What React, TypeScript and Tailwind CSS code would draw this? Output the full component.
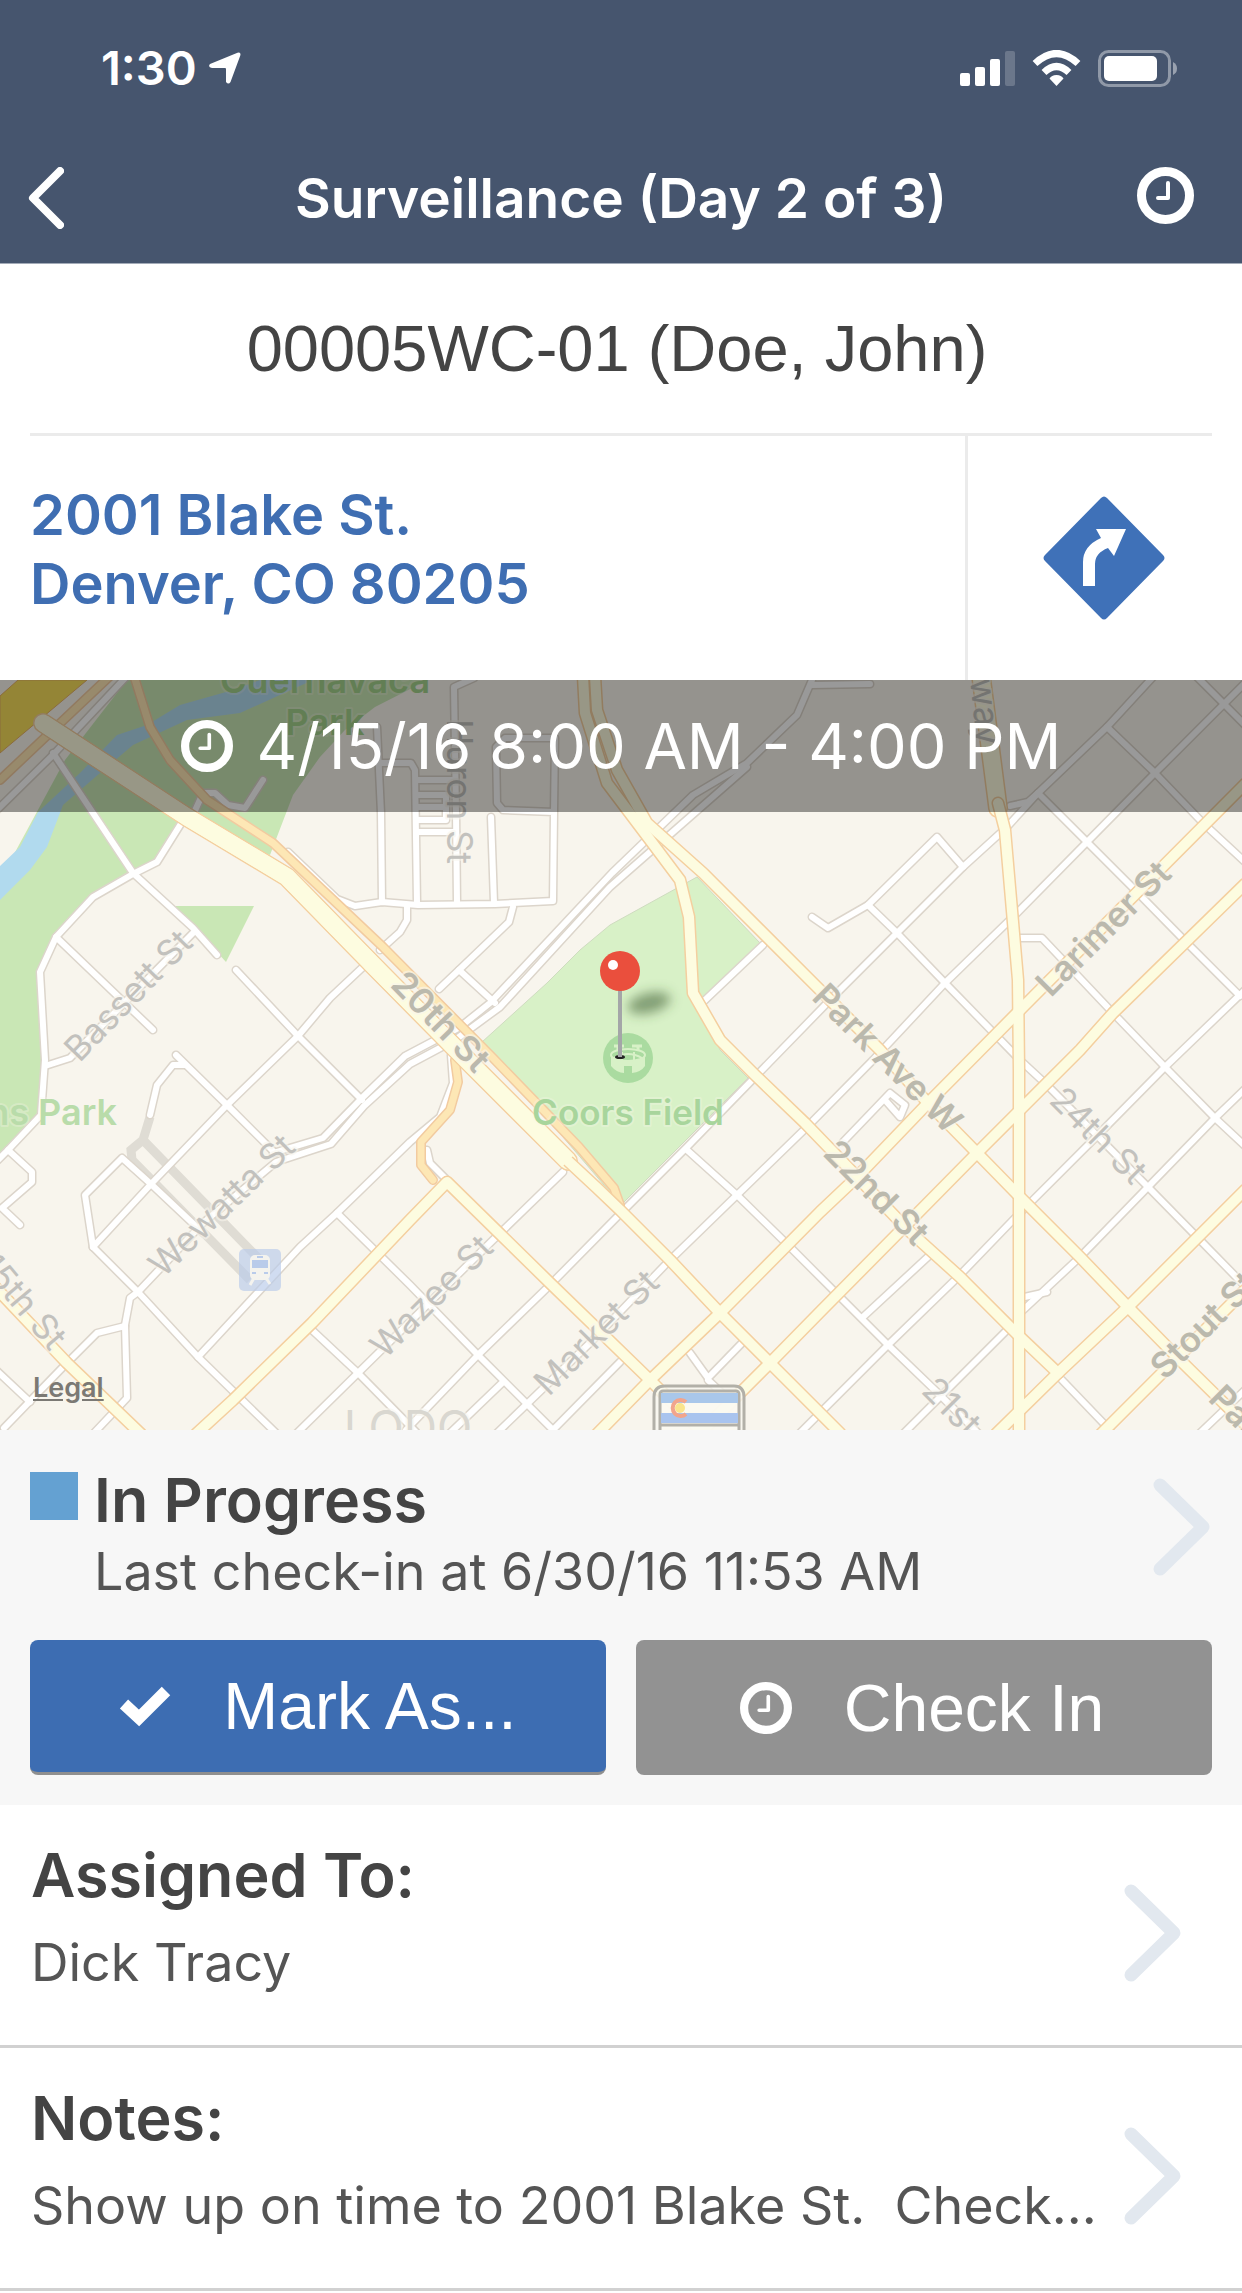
import type { ReactNode } from "react";

const whiteRoads = [
  "M53 753L133 873L193 928L217 955",
  "M182 822L157 862L133 874L93 897L56 937L40 972L45 1060L41 1115L8 1150L-4 1162",
  "M56 937L153 1030",
  "M45 1066L70 1058L193 933",
  "M-4 811L53 755L65 742L127 676",
  "M193 815L203 793L215 793L228 805L245 808L263 780",
  "M236 970L298 1036L362 1100",
  "M363 967L330 998L298 1036L227 1105L152 1183L93 1247",
  "M288 852L337 899L355 906L382 902L418 905L495 904L553 901L554 812L503 810L497 803L496 747L505 738L555 738L554 812",
  "M407 905L407 920L400 932L380 950",
  "M382 902L381 813L377 727",
  "M381 763L411 763L415 770L417 903",
  "M457 903L456 813L454 687L474 678",
  "M417 780H453M417 795H446V820M417 807H446M417 820H446M417 832H456",
  "M491 817L494 903",
  "M513 907L509 922L459 970L439 989",
  "M459 970L495 1003",
  "M812 680L797 715L747 763L693 795L612 873L490 1003L460 1027L405 1056L362 1098L323 1138L273 1153",
  "M747 767L610 887L500 1007L455 1040L410 1064L364 1106L331 1144L276 1162L203 1223L138 1292L130 1298L125 1325L127 1398L94 1433",
  "M125 1326L97 1333L63 1367L4 1428",
  "M-4 1370L30 1402",
  "M176 1055L227 1105L275 1153",
  "M185 1065L173 1065L157 1085L150 1115",
  "M93 1247L85 1195L122 1158L152 1185L203 1233",
  "M93 1247L138 1292L198 1357L276 1433",
  "M198 1357L300 1247L337 1213L410 1142L440 1117L453 1083L451 1055",
  "M8 1150L32 1172L32 1182L2 1208L20 1225",
  "M337 1213L410 1285L478 1355L556 1433",
  "M312 1330L358 1373L416 1432",
  "M297 1433L358 1373L493 1240L563 1172",
  "M406 1430L478 1355L548 1287L617 1217L687 1147L757 1075L830 1000L897 933L963 867L1007 827L1038 793L1107 727L1153 677",
  "M450 1433L502 1383",
  "M497 1433L528 1403L593 1340L667 1263L737 1195L807 1127L873 1060L945 983L1017 913L1087 842L1155 773L1245 683",
  "M550 1433L620 1362",
  "M427 1150L430 1163L447 1180",
  "M687 1150L737 1195L790 1247L830 1287L888 1345L940 1395L978 1433",
  "M690 1353L708 1378L742 1343",
  "M708 1380L727 1398",
  "M800 1433L888 1345L958 1277L1013 1220L1093 1140L1165 1067L1245 990",
  "M843 1142L890 1093L905 1105L900 1117L885 1100",
  "M863 1317L930 1255",
  "M904 1433L940 1397L1007 1330",
  "M1020 1313L1080 1257L1148 1187L1215 1118L1245 1089",
  "M1047 1292L1020 1298",
  "M1245 1286L1200 1240L1148 1187L1047 1085L1020 1060L945 983L897 933L868 905L937 837L963 867",
  "M868 905L828 928L812 917",
  "M1038 793L1087 842L1135 890L1187 943L1240 996",
  "M1107 727L1155 773L1203 823L1245 862",
  "M1197 677L1223 703L1245 725",
  "M1015 938H1042L1113 1013L1165 1067L1215 1118L1245 1146",
  "M1010 806L1028 802L1038 793",
  "M812 685L870 684",
  "M763 945L703 1002",
  "M1062 1380L1110 1430",
  "M1200 1433L1245 1390",
];

const amberRoads = [
  "M134 676L150 727L170 760L207 800L273 843L383 947L493 1058L579 1147L614 1188L620 1205",
  "M455 1060L458 1082L450 1110L421 1142L421 1165L433 1180",
  "M110 676L0 780",
];

const yellowRoads = [
  "M568 1161L597 1188L620 1210L670 1260L720 1313L770 1363L840 1433",
  "M583 676L585 713L607 783L650 840L680 880L689 917L693 993L720 1040L755 1075L805 1123L863 1183L908 1230L960 1277L1018 1335L1058 1373",
  "M595 676L597 710L617 770L647 823L703 873L830 1000L880 1050L928 1103L977 1153L1020 1197L1080 1257L1128 1307L1180 1360L1245 1424",
  "M998 803L1005 830L1018 980L1019 1070V1436",
  "M1245 784L1023 1007L928 1103L857 1177L820 1212L720 1313L648 1382L597 1434",
  "M1245 884L1113 1013L1080 1050L1020 1110L977 1153L908 1223L820 1312L770 1363L699 1434",
  "M1245 1190L1128 1307L1058 1373L996 1434",
  "M1245 1290L1101 1434",
  "M704 1434L650 1380L550 1283L498 1232L447 1182L410 1220L312 1323L233 1400L196 1434",
  "M-4 1288L67 1363L141 1434",
];

const broadRoads = ["M43 723L187 817L287 877L373 965L455 1048L568 1161", "M981 676L998 808"];

type StreetLabel = { text: string; x: number; y: number; turn: number; major?: boolean; anchor?: "start" | "middle" | "end" };

const streetLabels: StreetLabel[] = [
  { text: "Bassett St", x: 137, y: 1004, turn: -46 },
  { text: "Wewatta St", x: 230, y: 1214, turn: -44 },
  { text: "Wazee St", x: 440, y: 1305, turn: -45 },
  { text: "Market St", x: 605, y: 1341, turn: -45 },
  { text: "24th St", x: 1090, y: 1144, turn: 45 },
  { text: "21st St", x: 920, y: 1392, turn: 45, anchor: "start" },
  { text: "15th St", x: 50, y: 1352, turn: 50, anchor: "end" },
  { text: "Huron St", x: 447, y: 864, turn: 90, anchor: "end" },
  { text: "Broadway", x: 977, y: 746, turn: 84, anchor: "end" },
  { text: "20th St", x: 432, y: 1030, turn: 46, major: true },
  { text: "Park Ave W", x: 879, y: 1067, turn: 45, major: true },
  { text: "22nd St", x: 868, y: 1201, turn: 45, major: true },
  { text: "Larimer St", x: 1112, y: 937, turn: -45, major: true },
  { text: "Stout St", x: 1165, y: 1381, turn: -45, major: true, anchor: "start" },
  { text: "Park", x: 1207, y: 1400, turn: 45, major: true, anchor: "start" },
];

function Roads({ paths, edge, fill, width }: { paths: string[]; edge: string; fill: string; width: number }) {
  return (
    <g fill="none" strokeLinecap="round" strokeLinejoin="round">
      {paths.map((d) => (
        <path key={"e" + d} d={d} stroke={edge} strokeWidth={width + 3} />
      ))}
      {paths.map((d) => (
        <path key={"f" + d} d={d} stroke={fill} strokeWidth={width} />
      ))}
    </g>
  );
}

function CityMap() {
  return (
    <svg
      viewBox="0 680 1242 750"
      preserveAspectRatio="xMidYMid slice"
      className="block h-full w-full bg-[#f8f5ed]"
      role="img"
      aria-label="Map of Coors Field, Denver"
    >
      <defs>
        <filter id="pin-shadow" x="-50%" y="-100%" width="200%" height="300%">
          <feGaussianBlur stdDeviation="6" />
        </filter>
      </defs>

      {/* Parks and river */}
      <path
        fill="#c9e7b5"
        d="M127 680H428L375 707L345 730L320 757L293 795L270 855L182 822L157 862L133 874L93 897L56 937L40 972L45 1050L41 1115L8 1150L0 1158V880L65 760Z"
      />
      <path
        fill="#b1daee"
        d="M313 680L240 713L187 720L133 745L100 773L63 805L47 847L30 870L0 900V866L20 847L38 812L80 773L117 735L147 725L180 705L233 690L260 680Z"
      />
      <path fill="#c9e7b5" d="M175 906H254L226 962Z" />
      <path
        fill="#d8f1c7"
        stroke="#cfdcc0"
        d="M697 877L610 925L580 950L547 983L482 1042L621 1205L748 1078L720 1050L700 1005L760 943Z"
      />
      <path fill="#f7de5a" stroke="#e8b266" d="M18 680H87L0 753V696Z" />

      <path d="M150 1117L143 1140L131 1150L132 1160L250 1280M143 1140L262 1262" fill="none" stroke="#dfdcd4" strokeWidth="9" />
      <Roads paths={whiteRoads} edge="#dcd5cb" fill="#ffffff" width={6} />
      <Roads paths={amberRoads} edge="#f2cba0" fill="#fde7b5" width={7} />
      <Roads paths={broadRoads} edge="#f4cf9f" fill="#fdfce0" width={17} />
      <Roads paths={yellowRoads} edge="#f4cf9f" fill="#fdfce0" width={10} />
      <path d={broadRoads[0]} fill="none" stroke="#fdfce0" strokeWidth="17" />

      {/* Transit stop */}
      <rect x="239" y="1249" width="42" height="42" rx="5" fill="#b9cbea" fillOpacity="0.68" />
      <path d="M254 1278L250 1285M266 1278L270 1284" stroke="#f4f3ee" strokeWidth="3" />
      <rect x="250" y="1255" width="20" height="25" rx="5" fill="#f4f3ee" />
      <rect x="252" y="1260" width="16" height="8" fill="#b9cbea" />
      <path d="M252 1273H256M264 1273H268M257 1257H263" stroke="#b9cbea" strokeWidth="2" />

      {/* Stadium marker */}
      <circle cx="628" cy="1058" r="25" fill="#aadba0" />
      <path d="M618 1046V1054M638 1046V1054M632 1046H642M614 1046H624" stroke="#d8f1c7" strokeWidth="3" />
      <path d="M611 1055V1066Q617 1073 624 1073V1066H632V1073Q641 1072 645 1066V1055Z" fill="#d8f1c7" />
      <ellipse cx="628" cy="1055" rx="17" ry="6" fill="#aadba0" stroke="#d8f1c7" strokeWidth="2" />
      <path d="M614 1058Q628 1050 642 1058M622 1060V1052M634 1060V1052" fill="none" stroke="#d8f1c7" strokeWidth="2" />

      {/* Labels */}
      <g
        fontFamily="Inter, sans-serif"
        stroke="#f8f5ed"
        strokeOpacity="0.6"
        strokeWidth="4"
        strokeLinejoin="round"
        paintOrder="stroke"
      >
        {streetLabels.map((l) => (
          <text
            key={l.text + l.x}
            transform={"translate(" + l.x + " " + l.y + ") rotate(" + l.turn + ")"}
            textAnchor={l.anchor ?? "middle"}
            fontSize="35"
            fontWeight={l.major ? 600 : 400}
            fill={l.major ? "#bbb9ad" : "#c2c1bd"}
          >
            {l.text}
          </text>
        ))}
        <g fontSize="36" fontWeight="600" fill="#a8d59c" strokeOpacity="0.3">
          <text x="325" y="693" textAnchor="middle" fill="#a4d38c">Cuernavaca</text>
          <text x="325" y="735" textAnchor="middle" fill="#a4d38c">Park</text>
          <text x="628" y="1125" textAnchor="middle" fontSize="35">Coors Field</text>
          <text x="117" y="1125" textAnchor="end" fill="#b9dcaa">ns Park</text>
        </g>
        <text x="408" y="1444" fontSize="46" textAnchor="middle" fill="#d9d7d0">LODO</text>
      </g>

      {/* State route shield */}
      <g>
        <path d="M654 1432V1397Q654 1386 665 1386H734Q744 1386 744 1397V1432Z" fill="#f8f6ef" fillOpacity="0.8" stroke="#b2b0a8" strokeWidth="3" />
        <rect x="660" y="1391" width="79" height="50" rx="3" fill="#fbfaf1" fillOpacity="0.8" stroke="#b2b0a8" strokeWidth="3" />
        <rect x="661" y="1393" width="77" height="10" fill="#a9c7ea" />
        <rect x="661" y="1413" width="77" height="10" fill="#a9c4ee" />
        <path d="M660 1425H739" stroke="#b2b0a8" strokeWidth="3" />
        <circle cx="680" cy="1408" r="5" fill="#fae48d" />
        <path d="M686 1402A8 8 0 1 0 686 1414" fill="none" stroke="#f2a58c" strokeWidth="4" />
      </g>

      {/* Pin */}
      <ellipse cx="649" cy="1003" rx="22" ry="10" transform="rotate(-14 649 1003)" fill="#3c5a30" fillOpacity="0.55" filter="url(#pin-shadow)" />
      <ellipse cx="620" cy="1057" rx="5" ry="2" fill="#222222" />
      <path d="M620 988V1057" stroke="#a4a6a8" strokeWidth="4" />
      <circle cx="620" cy="971" r="20" fill="#ea4f3d" />
      <circle cx="613" cy="965" r="5" fill="#ffffff" />
    </svg>
  );
}

function ClockIcon({ className }: { className: string }) {
  return (
    <svg viewBox="0 0 57 57" className={className} fill="none" stroke="currentColor" aria-hidden="true">
      <circle cx="28.5" cy="28.5" r="24" strokeWidth="9" />
      <path d="M31 16V31H21" strokeWidth="4" strokeLinecap="round" strokeLinejoin="round" />
    </svg>
  );
}

function Chevron() {
  return (
    <svg viewBox="0 0 60 100" className="h-[100px] w-[60px] shrink-0" fill="none" stroke="#e2e8ef" strokeWidth="13" aria-hidden="true">
      <path d="M8 8L51 50L8 92" strokeLinecap="round" strokeLinejoin="round" />
    </svg>
  );
}

function StatusBar() {
  return (
    <div className="flex h-[96px] items-end justify-between pr-[65px] pl-[101px]">
      <div className="flex items-center gap-3">
        <span className="text-[47px] leading-[56px] font-semibold">1:30</span>
        <svg viewBox="0 0 32 32" className="size-8" aria-label="Location in use" fill="currentColor">
          <path d="M28.5 0.8Q32.2 -0.2 31.3 3.4L21.5 30Q19.5 33 17 30V17Q17 16 16 16H3Q-1.5 15 1 12Z" />
        </svg>
      </div>
      <div className="flex h-[56px] items-center">
        <svg viewBox="0 0 217 37" className="h-[37px] w-[217px]" aria-label="Signal, Wi-Fi and battery">
          <g fill="#ffffff">
            <rect x="0" y="23" width="10" height="13" rx="2" />
            <rect x="15" y="17" width="10" height="19" rx="2" />
            <rect x="30" y="9" width="10" height="27" rx="2" />
            <rect x="45" y="1" width="10" height="35" rx="2" fillOpacity="0.2" />
            <path d="M96.5 25C100 25 102 26.5 103.500 28.5L96.500 36L89.500 28.500C91 26.500 93 25 96.500 25Z" />
          </g>
          <path d="M84 22.500Q96.500 10.500 109 22.500" fill="none" stroke="#ffffff" strokeWidth="7" />
          <path d="M75 13.500Q96.500 -6.500 118 13.500" fill="none" stroke="#ffffff" strokeWidth="7" />
          <rect x="139.500" y="1.500" width="70" height="34" rx="9" fill="none" stroke="#ffffff" strokeOpacity="0.4" strokeWidth="3" />
          <rect x="144" y="6" width="53" height="25" rx="5" fill="#ffffff" />
          <path d="M213 12Q217 14 217 18.500Q217 23 213 25Z" fill="#ffffff" fillOpacity="0.45" />
        </svg>
      </div>
    </div>
  );
}

function DetailRow({ title, children }: { title: string; children: ReactNode }) {
  return (
    <a href="#" className="flex h-[243px] items-center justify-between border-b-[3px] border-[#d1d1d1] pr-[59px] pl-[31px]">
      <span className="flex min-w-0 flex-col gap-2 pb-3">
        <span className="text-[61px] leading-[80px] font-semibold text-[#444444]">{title}</span>
        <span className="text-[52px] leading-[80px] whitespace-pre text-[#555555]">{children}</span>
      </span>
      <span className="pt-4">
        <Chevron />
      </span>
    </a>
  );
}

export default function App() {
  return (
    <main className="w-full bg-white font-['Inter',sans-serif]">
      <header className="border-b border-[#a3abb8] bg-[#46556e] text-white">
        <StatusBar />
        <div className="flex h-[167px] items-center justify-between pt-8 pr-12 pl-7">
          <button type="button" aria-label="Back" className="w-[77px] pt-1">
            <svg viewBox="0 0 36 62" className="h-[62px] w-9" fill="none" stroke="currentColor" strokeWidth="8">
              <path d="M32 4L5 31L32 58" strokeLinecap="round" strokeLinejoin="round" />
            </svg>
          </button>
          <h1 className="pt-1 text-[55px] leading-[68px] font-semibold whitespace-nowrap">Surveillance (Day 2 of 3)</h1>
          <button type="button" aria-label="History">
            <ClockIcon className="size-[57px]" />
          </button>
        </div>
      </header>

      <section className="px-[30px]">
        <h2 className="flex h-[172px] items-center justify-center border-b-[3px] border-[#ebebeb] pr-2 font-['Liberation_Sans',sans-serif] text-[65px] leading-[76px] text-[#444444]">
          00005WC-01 (Doe, John)
        </h2>
        <div className="flex h-[244px] items-stretch">
          <address className="flex flex-1 items-center pb-4 text-[56px] leading-[69px] font-semibold text-[#3f6eb2] not-italic">
            <a href="#">
              2001 Blake St.
              <br />
              Denver, CO 80205
            </a>
          </address>
          <button type="button" aria-label="Directions" className="flex w-[247px] items-center justify-center border-l-[3px] border-[#ebebeb] pl-7">
            <svg viewBox="0 0 122 124" className="h-[124px] w-[122px]">
              <path d="M58 2Q61 -1 64 2L120 59Q123 62 120 65L64 122Q61 125 58 122L2 65Q-1 62 2 59Z" fill="#3f71b8" />
              <path d="M40 90V66Q40 50 58 42L53 33H83L71 60L65 52Q52 57 52 68V90Z" fill="#ffffff" />
            </svg>
          </button>
        </div>
      </section>

      <section className="relative h-[750px] overflow-hidden">
        <CityMap />
        <div className="absolute inset-x-0 top-0 flex h-[132px] items-center justify-center gap-6 bg-black/40 text-white">
          <ClockIcon className="size-[52px]" />
          <span className="text-[63px] leading-[80px]">4/15/16 8:00 AM - 4:00 PM</span>
        </div>
        <a href="#" className="absolute bottom-[26px] left-[33px] text-[27px] leading-8 font-semibold text-[#7b7974] underline underline-offset-2">
          Legal
        </a>
      </section>

      <section className="bg-[#f7f7f7] px-[30px] pb-[30px]">
        <a href="#" className="flex h-[210px] justify-between">
          <span className="flex gap-4 pt-[30px]">
            <span className="mt-3 size-12 shrink-0 bg-[#64a1d2]" />
            <span className="flex flex-col">
              <span className="text-[61px] leading-[80px] font-semibold text-[#444444]">In Progress</span>
              <span className="text-[52px] leading-[64px] text-[#555555]">Last check-in at 6/30/16 11:53 AM</span>
            </span>
          </span>
          <span className="pt-[47px]">
            <Chevron />
          </span>
        </a>
        <div className="grid grid-cols-2 gap-[30px] font-['Liberation_Sans',sans-serif] text-[66px] leading-[76px] text-white">
          <button type="button" className="flex h-[135px] items-center justify-center gap-[52px] rounded-lg border-b-[3px] border-[#8f8f8f] bg-[#3d6db2]">
            <svg viewBox="0 0 52 41" className="h-[41px] w-[52px]" fill="none" stroke="currentColor" strokeWidth="12" aria-hidden="true">
              <path d="M5 18L20 32L47 5" />
            </svg>
            Mark As...
          </button>
          <button type="button" className="flex h-[135px] items-center justify-center gap-[52px] rounded-lg bg-[#929292] pr-1">
            <ClockIcon className="size-[52px]" />
            Check In
          </button>
        </div>
      </section>

      <DetailRow title="Assigned To:">Dick Tracy</DetailRow>
      <DetailRow title="Notes:">{"Show up on time to 2001 Blake St.  Check..."}</DetailRow>
    </main>
  );
}
